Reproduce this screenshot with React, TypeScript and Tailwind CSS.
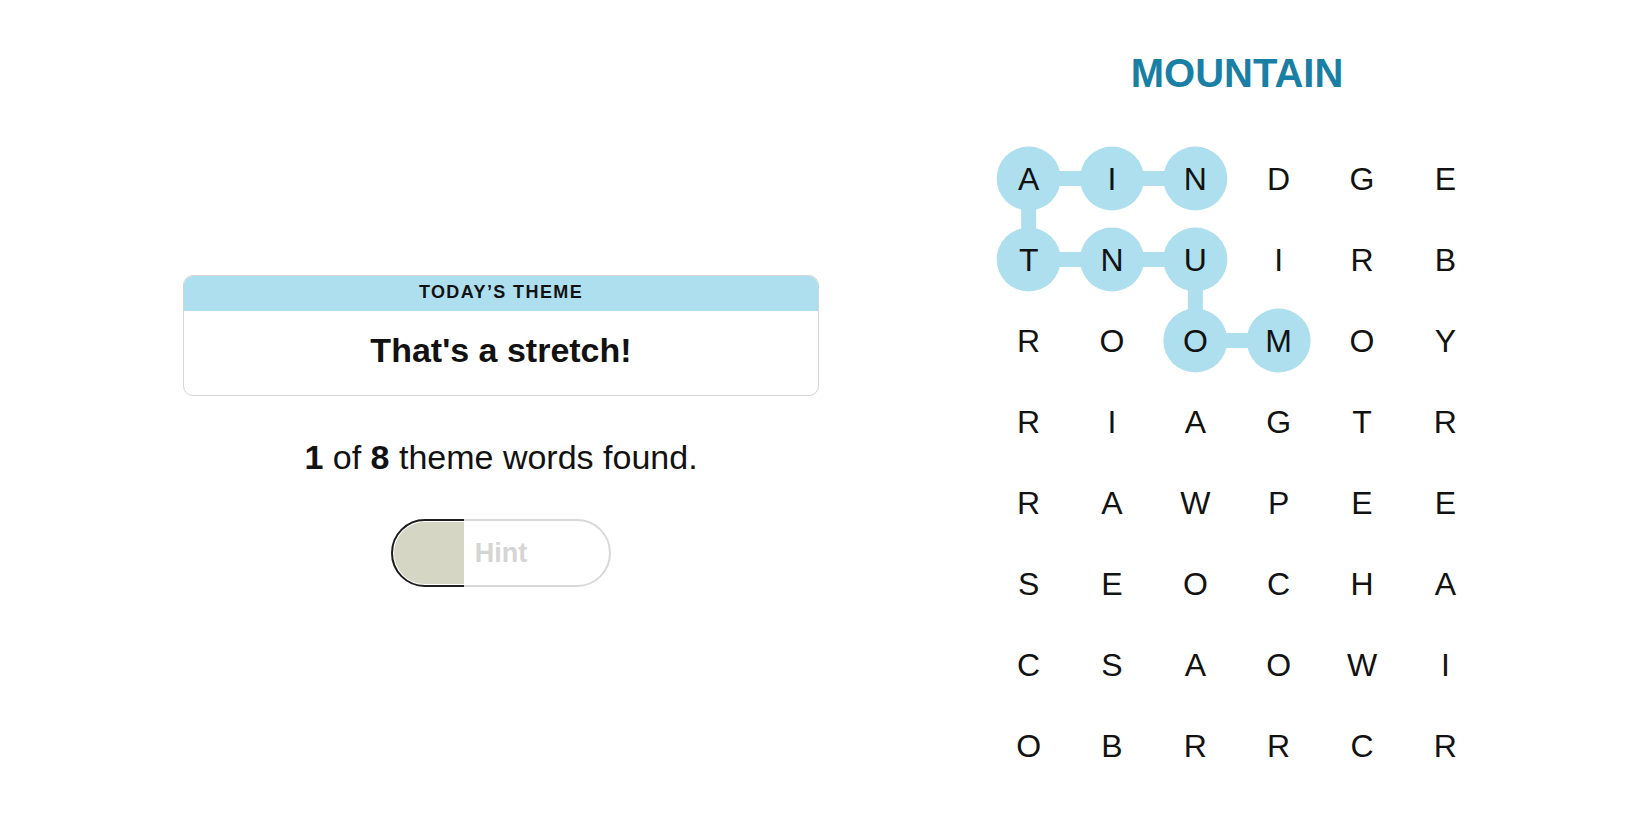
import React from "react";

const GRID: string[] = [
  "AINDGE",
  "TNUIRB",
  "ROOMOY",
  "RIAGTR",
  "RAWPEE",
  "SEOCHA",
  "CSAOWI",
  "OBRRCR",
];

const CW = 500 / 6;
const RH = 81;

// path of found word MOUNTAIN: [row, col]
const PATH: [number, number][] = [
  [2, 3],
  [2, 2],
  [1, 2],
  [1, 1],
  [1, 0],
  [0, 0],
  [0, 1],
  [0, 2],
];

const cx = (c: number) => (c + 0.5) * CW;
const cy = (r: number) => (r + 0.5) * RH;

function WordPath() {
  return (
    <svg
      className="absolute left-0 top-0"
      width={500}
      height={RH * 8}
      viewBox={`0 0 500 ${RH * 8}`}
    >
      {PATH.slice(1).map(([r, c], i) => {
        const [pr, pc] = PATH[i];
        return (
          <line
            key={`l${i}`}
            x1={cx(pc)}
            y1={cy(pr)}
            x2={cx(c)}
            y2={cy(r)}
            stroke="#aedfee"
            strokeWidth={15}
          />
        );
      })}
      {PATH.map(([r, c], i) => (
        <circle key={`c${i}`} cx={cx(c)} cy={cy(r)} r={32} fill="#aedfee" />
      ))}
    </svg>
  );
}

export default function App() {
  return (
    <div className="w-[1650px] h-[825px] bg-white flex font-['Liberation_Sans',Arial,sans-serif] text-[#121212] overflow-hidden">
      {/* Left panel */}
      <div className="ml-[183px] w-[636px] pt-[275px] flex flex-col items-center">
        <div className="w-full rounded-[10px] border border-[#d4d4d4] overflow-hidden">
          <div className="h-[35px] bg-[#aedfee] flex items-center justify-center pb-[3px]">
            <span className="text-[18px] font-semibold tracking-[1.4px] leading-none">
              TODAY’S THEME
            </span>
          </div>
          <div className="h-[84px] flex items-center justify-center pb-[6px]">
            <span className="text-[34px] font-bold leading-none">
              That's a stretch!
            </span>
          </div>
        </div>

        <p className="mt-[44px] text-[34px] leading-none">
          <span className="font-bold">1</span> of{" "}
          <span className="font-bold">8</span> theme words found.
        </p>

        <div className="mt-[45px] relative w-[220px] h-[68px]">
          <div className="absolute inset-0 rounded-full border-2 border-[#d9d9d9] bg-white" />
          <div className="absolute left-0 top-0 bottom-0 w-[73px] overflow-hidden">
            <div className="w-[220px] h-[68px] rounded-full border-2 border-[#1e1e1e] bg-white p-[1px]">
              <div className="w-full h-full rounded-full bg-[#d6d6c4]" />
            </div>
          </div>
          <div className="absolute inset-0 flex items-center justify-center">
            <span className="text-[27px] font-bold text-[#d5d5d5] leading-none">
              Hint
            </span>
          </div>
        </div>
      </div>

      {/* Right panel */}
      <div className="ml-[168px] w-[500px] pt-[53px] flex flex-col items-center">
        <h1 className="h-[41px] text-[40px] font-bold leading-[41px] text-[#1a7fa5]">
          MOUNTAIN
        </h1>
        <div className="mt-[44px] relative w-[500px]">
          <WordPath />
          <div className="relative grid grid-cols-6 grid-rows-[repeat(8,81px)]">
            {GRID.flatMap((row, r) =>
              row.split("").map((ch, c) => (
                <div
                  key={`${r}-${c}`}
                  className="flex items-center justify-center text-[32px] leading-none text-[#121212]"
                >
                  {ch}
                </div>
              ))
            )}
          </div>
        </div>
      </div>
    </div>
  );
}
